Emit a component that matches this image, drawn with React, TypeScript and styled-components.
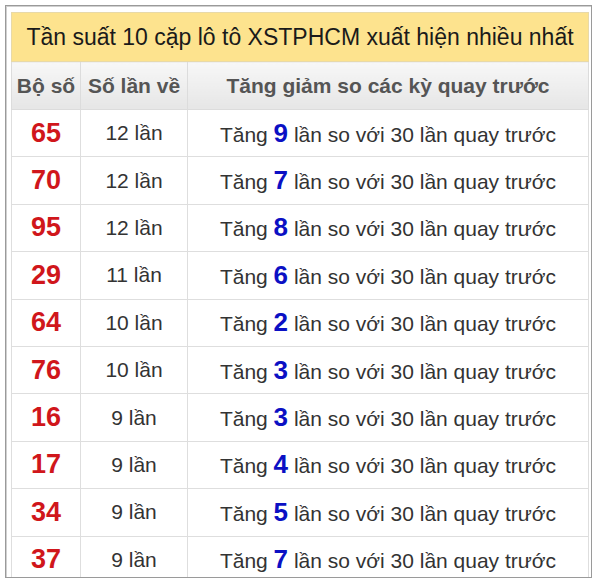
import React from "react";
import styled, { createGlobalStyle } from "styled-components";

const Global = createGlobalStyle`
  html, body { margin: 0; padding: 0; background: #ffffff; }
  body { font-family: "Liberation Sans", Arial, sans-serif; }
`;

const Frame = styled.div`
  margin: 5px 0 0 5px;
  width: 587px;
  height: 573px;
  box-sizing: border-box;
  border: 1px solid #9a9a9a;
  box-shadow: inset 1px 1px 0 #d0d0d0;
  padding: 6px 2px 0 5px;
  overflow: hidden;
  background: #fff;
`;

const Table = styled.table`
  width: 100%;
  border-collapse: collapse;
  table-layout: fixed;
  font-family: "Liberation Sans", Arial, sans-serif;
`;

const TitleCell = styled.th`
  height: 48px;
  padding: 0;
  background: #fde38e;
  color: #1a1a1a;
  font-weight: normal;
  font-size: 23px;
  text-align: center;
  border: 1px solid #e8d9a8;
  white-space: nowrap;
`;

const HeadCell = styled.th`
  height: 47px;
  padding: 0;
  background: linear-gradient(#f7f7f7, #e6e6e6);
  color: #555555;
  font-weight: bold;
  font-size: 21px;
  text-align: center;
  border: 1px solid #dcdcdc;
  white-space: nowrap;
`;

const Cell = styled.td`
  height: 46.4px;
  padding: 0;
  text-align: center;
  border: 1px solid #dedede;
  color: #333333;
  font-size: 21px;
  white-space: nowrap;
`;

const Pair = styled.span`
  color: #d0161b;
  font-weight: bold;
  font-size: 27px;
`;

const Count = styled.span`
  color: #0b10c4;
  font-weight: bold;
  font-size: 26px;
`;

const rows: [string, number, number][] = [
  ["65", 12, 9],
  ["70", 12, 7],
  ["95", 12, 8],
  ["29", 11, 6],
  ["64", 10, 2],
  ["76", 10, 3],
  ["16", 9, 3],
  ["17", 9, 4],
  ["34", 9, 5],
  ["37", 9, 7],
];

export default function App() {
  return (
    <>
      <Global />
      <Frame>
        <Table>
          <colgroup>
            <col style={{ width: 69 }} />
            <col style={{ width: 107 }} />
            <col />
          </colgroup>
          <thead>
            <tr>
              <TitleCell colSpan={3}>Tần suất 10 cặp lô tô XSTPHCM xuất hiện nhiều nhất</TitleCell>
            </tr>
            <tr>
              <HeadCell>Bộ số</HeadCell>
              <HeadCell>Số lần về</HeadCell>
              <HeadCell>Tăng giảm so các kỳ quay trước</HeadCell>
            </tr>
          </thead>
          <tbody>
            {rows.map(([pair, times, inc]) => (
              <tr key={pair}>
                <Cell>
                  <Pair>{pair}</Pair>
                </Cell>
                <Cell>{times} lần</Cell>
                <Cell>
                  Tăng <Count>{inc}</Count> lần so với 30 lần quay trước
                </Cell>
              </tr>
            ))}
          </tbody>
        </Table>
      </Frame>
    </>
  );
}
